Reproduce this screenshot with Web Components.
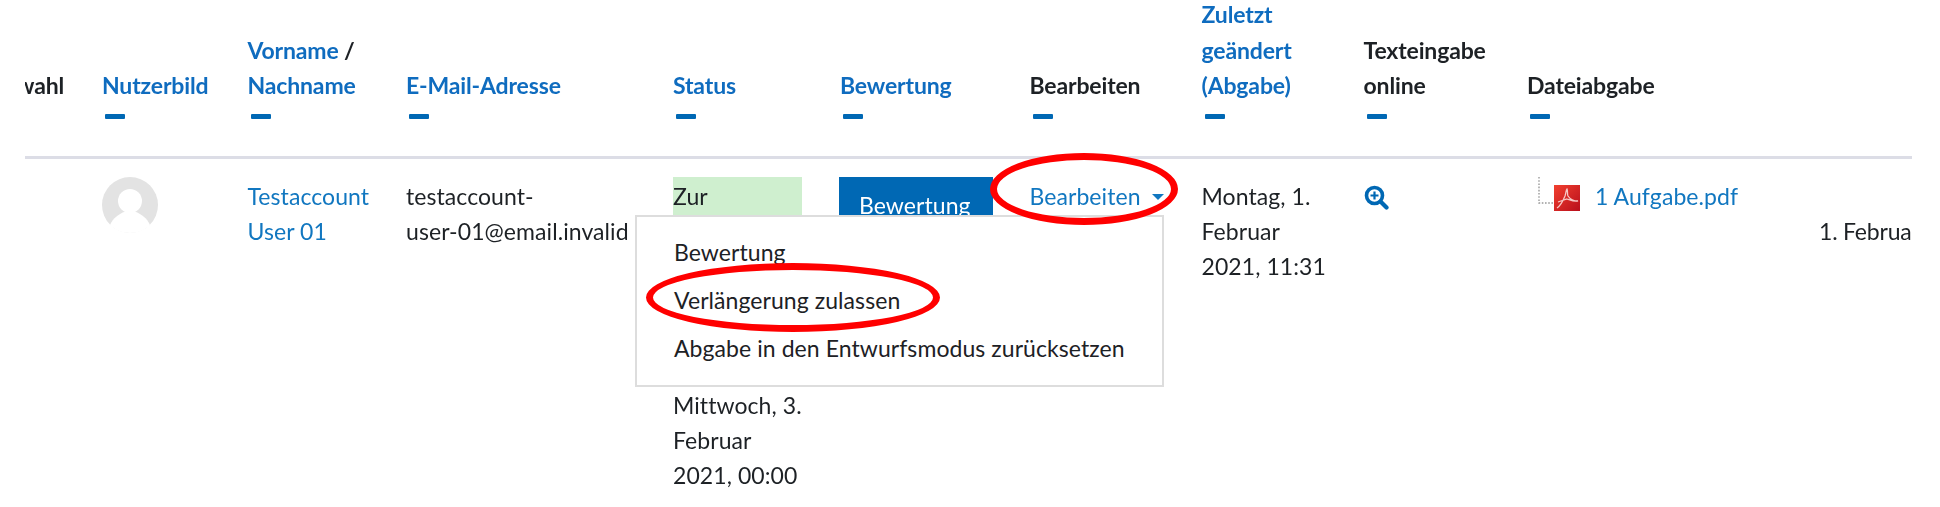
<!DOCTYPE html>
<html lang="de">
<head>
<meta charset="utf-8">
<title>Bewertung</title>
<style>
  html, body { margin: 0; background: #fff; }
  body { width: 1940px; height: 507px; overflow: hidden; font: 23px/35.2px Lato, "Noto Sans", sans-serif; letter-spacing: .07px; color: #1d2125; }
  a { color: #1177c0; text-decoration: none; }
</style>
</head>
<body>
<grade-table>
  <th-cell nodash><span style="margin-left:-9px">wahl</span></th-cell>
  <th-cell link>Nutzerbild</th-cell>
  <th-cell><span style="color:#0f6cbf">Vorname</span> /<br><span style="color:#0f6cbf">Nachname</span></th-cell>
  <th-cell link>E-Mail-Adresse</th-cell>
  <th-cell link>Status</th-cell>
  <th-cell link>Bewertung</th-cell>
  <th-cell>Bearbeiten</th-cell>
  <th-cell link>Zuletzt<br>geändert<br>(Abgabe)</th-cell>
  <th-cell>Texteingabe<br>online</th-cell>
  <th-cell>Dateiabgabe</th-cell>
  <th-cell nodash></th-cell>

  <td-cell></td-cell>
  <td-cell flush><user-avatar></user-avatar></td-cell>
  <td-cell><a href="#">Testaccount<br>User 01</a></td-cell>
  <td-cell>testaccount-<br>user-01@email.invalid</td-cell>
  <td-cell flush>
    <status-block>Zur</status-block>
    <div style="margin-top:151px">Mittwoch, 3.<br>Februar<br>2021, 00:00</div>
  </td-cell>
  <td-cell flush><grade-button>Bewertung</grade-button></td-cell>
  <td-cell><a href="#">Bearbeiten<caret-mark></caret-mark></a></td-cell>
  <td-cell>Montag, 1.<br>Februar<br>2021, 11:31</td-cell>
  <td-cell><zoom-icon></zoom-icon></td-cell>
  <td-cell flush><file-link>1 Aufgabe.pdf</file-link></td-cell>
  <td-cell><div style="padding-top:35.2px;margin-left:-2px;letter-spacing:-.2px;white-space:nowrap">1. Februa</div></td-cell>

  <action-menu slot="over">
    <span>Bewertung</span>
    <span>Verlängerung zulassen</span>
    <span>Abgabe in den Entwurfsmodus zurücksetzen</span>
  </action-menu>
  <red-ring slot="over" style="left:990px;top:153px;width:188px;height:72px"></red-ring>
  <red-ring slot="over" style="left:646px;top:263px;width:294px;height:69px"></red-ring>
</grade-table>

<script>
  // small helper so each element only has to say what goes in its shadow root
  class Base extends HTMLElement {
    connectedCallback() {
      if (this.shadowRoot) return;
      this.attachShadow({ mode: 'open' });
      this.shadowRoot.innerHTML = this.constructor.html;
    }
  }

  class GradeTable extends Base {
    static html = `
      <style>
        :host { display: block; position: relative; width: 1940px; height: 507px; filter: blur(.4px); }
        .clip { margin-left: 25px; width: 1887px; height: 507px; overflow: hidden; }
        .grid {
          display: grid;
          grid-template-columns: 77px 145.5px 158.5px 267px 167px 189.5px 172px 162px 163.5px 294px 200px;
          grid-template-rows: 159px auto;
        }
      </style>
      <div class="clip"><div class="grid"><slot></slot></div></div>
      <slot name="over"></slot>`;
  }

  class ThCell extends Base {
    static html = `
      <style>
        :host { display: flex; flex-direction: column; justify-content: flex-end; align-self: end;
                height: 159px; box-sizing: border-box; padding-bottom: 37px; border-bottom: 3px solid #dcdde6;
                font-weight: 700; letter-spacing: -.15px; white-space: nowrap; min-width: 0; }
        :host([link]) { color: #0f6cbf; }
        .dash { width: 20px; height: 5px; margin: 11px 0 0 3px; border-radius: 1px; background: #0068b4; flex: none; }
        :host([nodash]) .dash { visibility: hidden; }
      </style>
      <div><slot></slot></div>
      <div class="dash"></div>`;
  }

  class TdCell extends Base {
    static html = `
      <style>
        :host { display: block; padding-top: 19.5px; white-space: nowrap; }
        :host([flush]) { padding-top: 18px; }
      </style>
      <slot></slot>`;
  }

  class UserAvatar extends Base {
    static html = `
      <style>:host { display: block; width: 56px; height: 56px; } svg { display: block; }</style>
      <svg width="56" height="56" viewBox="0 0 56 56">
        <circle cx="28" cy="28" r="28" fill="#e3e3e3"/>
        <circle cx="28" cy="24" r="12" fill="#fff"/>
        <path d="M8 48c3-7 9-11 14-13h12c5 2 11 6 14 13-5 5-12 8-20 8s-15-3-20-8z" fill="#fff"/>
      </svg>`;
  }

  class StatusBlock extends Base {
    static html = `
      <style>:host { display: block; width: 129px; height: 60px; padding-top: 1.5px; box-sizing: border-box; background: #cfefcf; }</style>
      <slot></slot>`;
  }

  class GradeButton extends Base {
    static html = `
      <style>
        :host { display: block; width: 154px; height: 62px; margin-left: -1px; box-sizing: border-box; padding: 11px 0 0 20px;
                background: #0068b4; color: #fff; }
      </style>
      <slot></slot>`;
  }

  class CaretMark extends Base {
    static html = `
      <style>
        :host { display: inline-block; width: 0; height: 0; margin-left: 11px; vertical-align: 5px;
                border: 6px solid transparent; border-top-color: #1177c0; border-bottom: 0; }
      </style>`;
  }

  class ZoomIcon extends Base {
    static html = `
      <style>:host { display: block; width: 25px; height: 25px; margin-top: 6px; } svg { display: block; }</style>
      <svg width="25" height="25" viewBox="0 0 25 25" fill="none" stroke="#0068b4">
        <circle cx="10.5" cy="10.5" r="8" stroke-width="3.6"/>
        <path d="M16.5 16.5l6 6" stroke-width="4.2" stroke-linecap="round"/>
        <path d="M10.5 6.5v8M6.5 10.5h8" stroke-width="2.2"/>
      </svg>`;
  }

  class FileLink extends Base {
    static html = `
      <style>
        :host { display: flex; align-items: flex-start; margin-left: 11px; color: #1177c0; line-height: 35.2px; padding-top: 1.5px; }
        svg { flex: none; display: block; margin: -1.5px 15px 0 0; }
      </style>
      <svg width="42" height="36" viewBox="0 0 42 36">
        <defs>
          <linearGradient id="red" x1="0" y1="0" x2="1" y2="1">
            <stop offset="0" stop-color="#f2402f"/>
            <stop offset="1" stop-color="#b80f1c"/>
          </linearGradient>
        </defs>
        <path d="M1 0v26h15" fill="none" stroke="#999" stroke-width="1.4" stroke-dasharray="1.6 1.6"/>
        <rect x="16" y="8" width="26" height="26" fill="url(#red)"/>
        <path d="M19 31c3-2 6-7 8-12 1-3 1-6 2-7 1 2 0 5 1 7 2 3 5 5 10 5-3 1-8-1-11-2-3 1-6 2-9 3" fill="none" stroke="#f6c9c6" stroke-width="1.3"/>
      </svg>
      <slot></slot>`;
  }

  class ActionMenu extends Base {
    static html = `
      <style>
        :host { position: absolute; left: 635px; top: 215px; width: 529px; height: 172px; box-sizing: border-box;
                display: flex; flex-direction: column; gap: 13px; padding: 18px 0 0 37px;
                background: #fff; border: 2px solid #ddd; }
        ::slotted(span) { display: block; white-space: nowrap; }
      </style>
      <slot></slot>`;
  }

  class RedRing extends Base {
    static html = `
      <style>
        :host { position: absolute; box-sizing: border-box; border: 7px solid #f00; border-radius: 50%; }
      </style>`;
  }

  customElements.define('grade-table', GradeTable);
  customElements.define('th-cell', ThCell);
  customElements.define('td-cell', TdCell);
  customElements.define('user-avatar', UserAvatar);
  customElements.define('status-block', StatusBlock);
  customElements.define('grade-button', GradeButton);
  customElements.define('caret-mark', CaretMark);
  customElements.define('zoom-icon', ZoomIcon);
  customElements.define('file-link', FileLink);
  customElements.define('action-menu', ActionMenu);
  customElements.define('red-ring', RedRing);
</script>
</body>
</html>
